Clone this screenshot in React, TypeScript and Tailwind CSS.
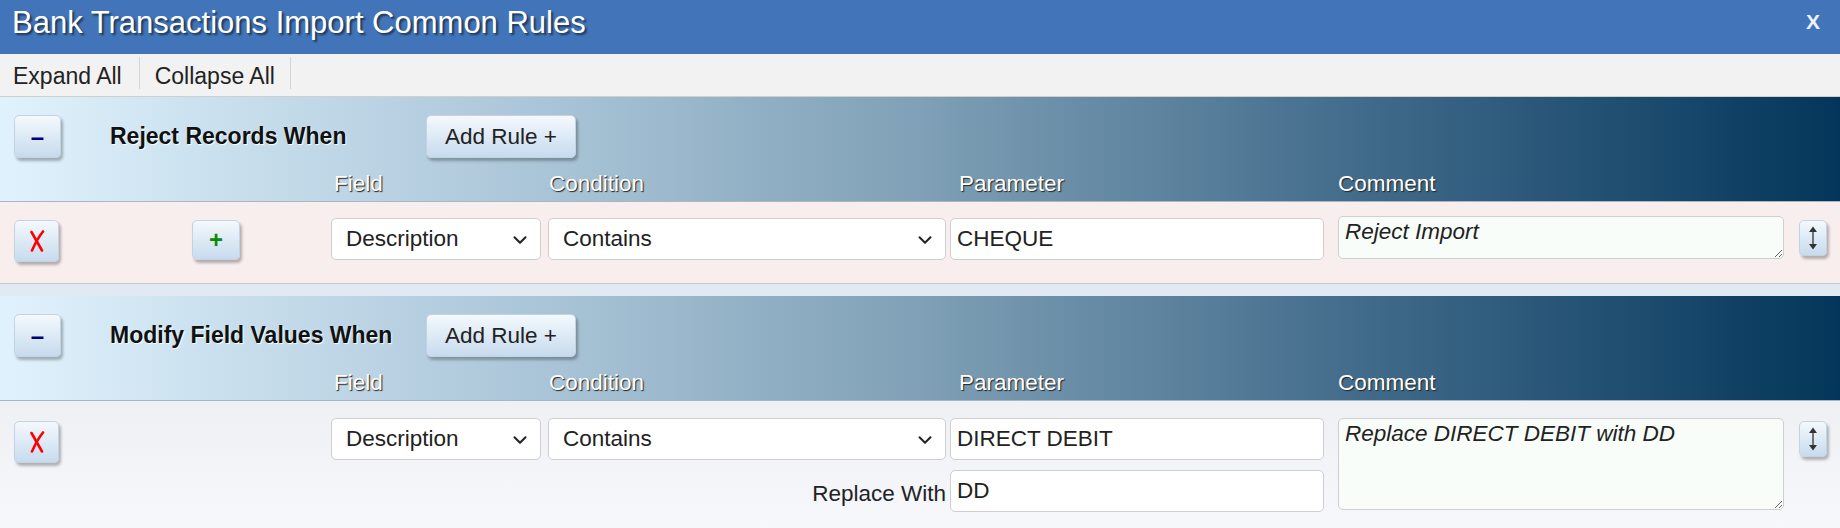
import React from 'react';
import { ChevronDown } from 'lucide-react';

const font = { fontFamily: '"Liberation Sans", Arial, sans-serif' };

const btn =
  'flex items-center justify-center rounded-[5px] border border-[#c3d3e2] bg-gradient-to-b from-[#f4f9fd] to-[#c7dbee] shadow-[2px_3px_3px_rgba(0,0,0,0.28)]';

const Select = ({ value, width }: { value: string; width: string }) => (
  <div className={`relative h-[42px] ${width} rounded-[5px] border border-[#cfcfcf] bg-white`}>
    <div className="flex h-full items-center pl-[14px] text-[22.5px] text-[#222]">{value}</div>
    <ChevronDown className="absolute right-[9px] top-[10px] h-[22px] w-[22px] text-[#222]" strokeWidth={2.2} />
  </div>
);

const Input = ({ value }: { value: string }) => (
  <div className="flex h-[42px] w-[374px] items-center rounded-[5px] border border-[#cfcfcf] bg-white pl-[6px] text-[22.5px] text-[#222]">
    {value}
  </div>
);

const SectionHeader = ({ title }: { title: string }) => (
  <div className="border-b border-[#a8b7c3] bg-[linear-gradient(to_right,#e0f2fd_0%,#a9c4d7_30%,#7fa0b6_50%,#3f6989_75%,#03365a_100%)] pt-[18px]">
    <div className="flex h-[43px] items-center">
      <button className={`${btn} ml-[14px] h-[43px] w-[47px] text-[24px] font-bold text-[#00007a]`}>–</button>
      <div className="ml-[49px] w-[316px] text-[23px] font-bold text-[#111] [text-shadow:1px_1px_1px_#fff]">{title}</div>
      <button className={`${btn} h-[43px] w-[150px] text-[22.5px] text-[#222]`}>Add Rule +</button>
    </div>
    <div className="flex h-[43px] items-end pb-[4px] text-[22.5px] leading-[26px] text-white [text-shadow:1px_1px_1px_#222]">
      <div className="ml-[334px] w-[215px]">Field</div>
      <div className="w-[410px]">Condition</div>
      <div className="w-[379px]">Parameter</div>
      <div>Comment</div>
    </div>
  </div>
);

const SortBtn = () => (
  <button className={`${btn} ml-[15px] h-[36px] w-[28px]`}>
    <svg width="12" height="26" viewBox="0 0 12 26" fill="none">
      <line x1="6" y1="3" x2="6" y2="23" stroke="#333" strokeWidth="1.3" />
      <path d="M2 7 L6 1.5 L10 7 Z" fill="#333" />
      <path d="M2 19 L6 24.5 L10 19 Z" fill="#333" />
    </svg>
  </button>
);

const DelBtn = () => (
  <button className={`${btn} ml-[14px] h-[42px] w-[45px]`}>
    <svg width="16" height="22" viewBox="0 0 16 22" fill="none">
      <path d="M2.5 2 Q7 10 13 20.5" stroke="#ff0000" strokeWidth="2.6" strokeLinecap="round" />
      <path d="M14 1.5 Q8 9 3 20.5" stroke="#ff0000" strokeWidth="2.6" strokeLinecap="round" />
    </svg>
  </button>
);

export default function App() {
  return (
    <div className="h-[528px] w-[1840px] overflow-hidden bg-white" style={font}>
      {/* title bar */}
      <div className="flex h-[54px] items-start justify-between bg-[#4174b9] pl-[12px] pr-[20px] text-white">
        <div className="pt-[5px] text-[31px] leading-[36px] [text-shadow:2px_2px_2px_rgba(0,0,0,0.55)]">
          Bank Transactions Import Common Rules
        </div>
        <div className="pt-[6px] text-[21px] font-bold text-[#eef2fa]">X</div>
      </div>

      {/* toolbar */}
      <div className="flex h-[43px] items-start border-b border-[#cfcfcf] bg-[#f2f2f2] text-[23px] text-[#222]">
        <div className="mt-[3px] flex h-[32px] items-center border-r border-[#d6d6d6] pl-[13px] pr-[17px] pt-[6px]">Expand All</div>
        <div className="mt-[3px] flex h-[32px] items-center border-r border-[#d6d6d6] pl-[15px] pr-[15px] pt-[6px]">Collapse All</div>
      </div>

      {/* reject section */}
      <SectionHeader title="Reject Records When" />
      <div className="flex h-[82px] items-start border-b border-[#c8c8c8] bg-[#f9eeee] pt-[16px]">
        <div className="flex w-[331px] items-start pt-[2px]">
          <DelBtn />
          <button className={`${btn} ml-[133px] h-[40px] w-[48px] text-[24px] font-bold text-[#0a8a0a]`}>+</button>
        </div>
        <Select value="Description" width="w-[210px]" />
        <div className="ml-[7px]">
          <Select value="Contains" width="w-[398px]" />
        </div>
        <div className="ml-[4px]">
          <Input value="CHEQUE" />
        </div>
        <textarea
          readOnly
          defaultValue="Reject Import"
          className="-mt-[2px] ml-[14px] h-[43px] w-[446px] rounded-[5px] border border-[#cfcfcf] bg-[#f8fdf9] px-[6px] pt-[2px] text-[22.5px] italic leading-[26px] text-[#222] outline-none"
        />
        <div className="pt-[2px]">
          <SortBtn />
        </div>
      </div>

      <div className="h-[12px] bg-[#e1eaf2]" />

      {/* modify section */}
      <SectionHeader title="Modify Field Values When" />
      <div className="flex h-[128px] items-start bg-gradient-to-b from-[#eef0f3] to-[#f6f8fc] pt-[17px]">
        <div className="flex w-[331px] items-start pt-[3px]">
          <DelBtn />
        </div>
        <Select value="Description" width="w-[210px]" />
        <div className="ml-[7px]">
          <Select value="Contains" width="w-[398px]" />
        </div>
        <div className="ml-[4px] flex flex-col items-end">
          <Input value="DIRECT DEBIT" />
          <div className="relative mt-[10px]">
            <span className="absolute right-[378px] top-[7px] whitespace-nowrap text-[22.5px] text-[#222]">Replace With</span>
            <Input value="DD" />
          </div>
        </div>
        <textarea
          readOnly
          defaultValue="Replace DIRECT DEBIT with DD"
          className="ml-[14px] h-[92px] w-[446px] rounded-[5px] border border-[#cfcfcf] bg-[#f8fdf9] px-[6px] pt-[2px] text-[22.5px] italic leading-[26px] text-[#222] outline-none"
        />
        <div className="pt-[3px]">
          <SortBtn />
        </div>
      </div>
    </div>
  );
}
